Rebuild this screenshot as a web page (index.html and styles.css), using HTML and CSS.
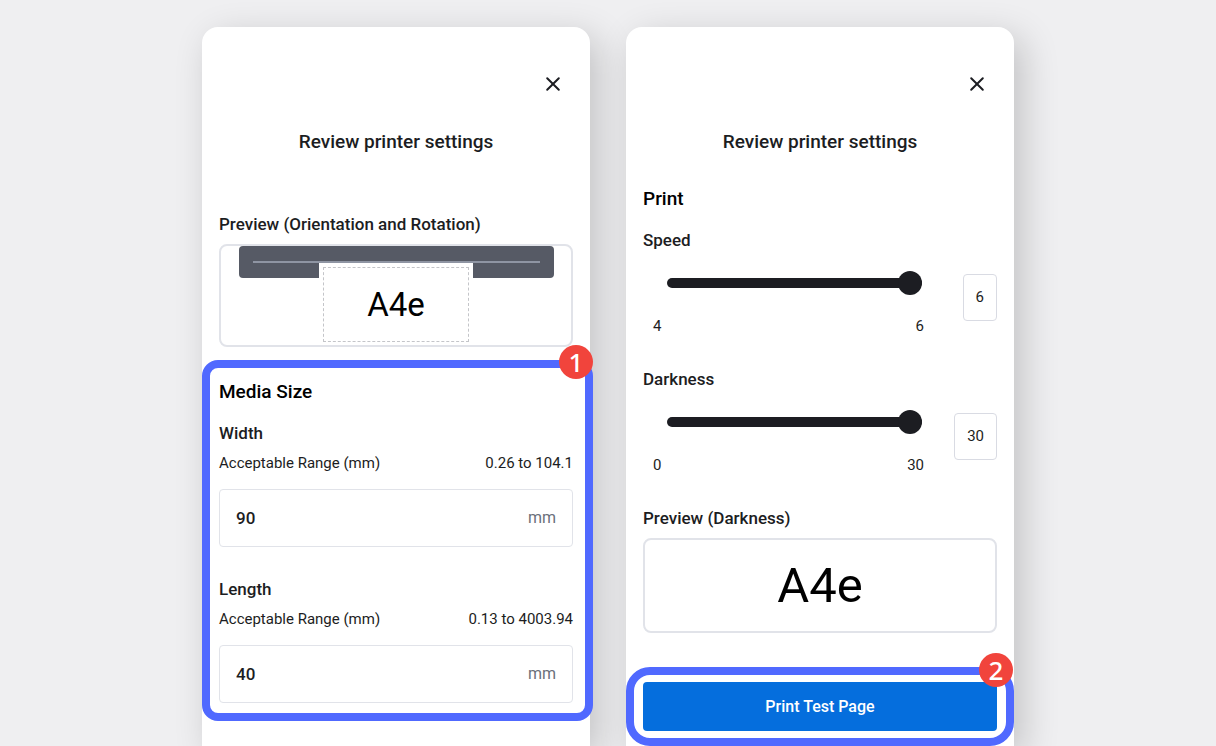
FILE: index.html
```
<!DOCTYPE html>
<html lang="en">
<head>
    <meta charset="utf-8">
    <meta name="viewport" content="width=device-width, initial-scale=1">
    <title>Review printer settings</title>
    <link rel="stylesheet" href="styles.css">
</head>
<body>
    <div class="container">

        <!-- Step 1: media size -->
        <section class="panel">
            <header class="panel-head">
                <button class="close" type="button" aria-label="Close">
                    <svg width="16" height="16" viewBox="0 0 16 16"><path d="M2.2 2.2 13.8 13.8M13.8 2.2 2.2 13.8"/></svg>
                </button>
                <h1>Review printer settings</h1>
            </header>

            <h3 class="preview-label">Preview (Orientation and Rotation)</h3>
            <div class="preview orientation">
                <div class="printer">
                    <div class="slot"></div>
                </div>
                <div class="paper">
                    <div class="sample">A4e</div>
                </div>
            </div>

            <div class="highlight media">
                <span class="badge">1</span>
                <h2>Media Size</h2>

                <div class="field">
                    <label for="width">Width</label>
                    <div class="range-text">
                        <span>Acceptable Range (mm)</span>
                        <span>0.26 to 104.1</span>
                    </div>
                    <div class="input-box">
                        <input id="width" type="text" value="90">
                        <span class="unit">mm</span>
                    </div>
                </div>

                <div class="field">
                    <label for="length">Length</label>
                    <div class="range-text">
                        <span>Acceptable Range (mm)</span>
                        <span>0.13 to 4003.94</span>
                    </div>
                    <div class="input-box">
                        <input id="length" type="text" value="40">
                        <span class="unit">mm</span>
                    </div>
                </div>
            </div>
        </section>

        <!-- Step 2: print settings -->
        <section class="panel">
            <header class="panel-head">
                <button class="close" type="button" aria-label="Close">
                    <svg width="16" height="16" viewBox="0 0 16 16"><path d="M2.2 2.2 13.8 13.8M13.8 2.2 2.2 13.8"/></svg>
                </button>
                <h1>Review printer settings</h1>
            </header>

            <h2 class="print-title">Print</h2>

            <div class="setting">
                <label for="speed">Speed</label>
                <div class="setting-row">
                    <div class="slider">
                        <input id="speed" type="range" min="4" max="6" value="6">
                        <div class="limits"><span>4</span><span>6</span></div>
                    </div>
                    <output class="value" for="speed">6</output>
                </div>
            </div>

            <div class="setting">
                <label for="darkness">Darkness</label>
                <div class="setting-row">
                    <div class="slider">
                        <input id="darkness" type="range" min="0" max="30" value="30">
                        <div class="limits"><span>0</span><span>30</span></div>
                    </div>
                    <output class="value" for="darkness">30</output>
                </div>
            </div>

            <h3>Preview (Darkness)</h3>
            <div class="preview darkness">A4e</div>

            <div class="highlight action">
                <span class="badge">2</span>
                <button class="print-button" type="button">Print Test Page</button>
            </div>
        </section>

    </div>
</body>
</html>
```
FILE: styles.css
```
* {
    box-sizing: border-box;
    margin: 0;
    padding: 0;
}

body {
    background: #efeff1;
    color: #1c1d22;
    font-family: Roboto, "Liberation Sans", sans-serif;
    font-size: 15px;
    line-height: 20px;
}

input, button {
    font-family: inherit;
    color: inherit;
}

.container {
    display: flex;
    justify-content: center;
    gap: 36px;
    min-height: 100vh;
    padding: 27px 20px 0;
    overflow: hidden;
}

.panel {
    flex: 0 1 388px;
    padding: 43px 17px 0;
    background: white;
    border-radius: 16px 16px 0 0;
    box-shadow: 9px 10px 36px rgba(0, 0, 0, 0.19);
}

.panel-head {
    display: flex;
    flex-direction: column;
}

.close {
    align-self: flex-end;
    display: flex;
    align-items: center;
    justify-content: center;
    width: 28px;
    height: 28px;
    margin-right: 6px;
    border: none;
    background: none;
    cursor: pointer;
}

.close svg {
    fill: none;
    stroke: #1c1d22;
    stroke-width: 2;
    stroke-linecap: round;
}

h1, h2 {
    font-size: 19px;
    font-weight: 500;
    line-height: 24px;
}

h1 {
    margin-top: 32px;
    text-align: center;
}

h2 {
    color: black;
}

h3, label {
    display: block;
    font-size: 17px;
    font-weight: 500;
    line-height: 20px;
}

/* previews */
.preview-label {
    margin-top: 60px;
}

.preview {
    margin-top: 10px;
    border: 2px solid #e1e3e9;
    border-radius: 8px;
    color: black;
}

.orientation {
    display: flex;
    flex-direction: column;
    align-items: center;
    height: 103px;
}

.printer {
    width: 90%;
    height: 32px;
    padding: 15px 14px 0;
    border-radius: 4px;
    background: #565a65;
}

.slot {
    height: 2px;
    background: #8f95a3;
}

.paper {
    width: 154px;
    height: 80px;
    margin-top: -15px;
    padding: 4px;
    background: white;
}

.sample {
    height: 75px;
    border: 1px dashed #c4c5c9;
    font-size: 33px;
    line-height: 73px;
    text-align: center;
}

.darkness {
    height: 95px;
    font-size: 49px;
    line-height: 91px;
    text-align: center;
}

/* numbered step outlines */
.highlight {
    position: relative;
    border: 8px solid #5069ff;
    border-radius: 16px;
}

.badge {
    position: absolute;
    top: -23px;
    right: -8px;
    width: 34px;
    height: 34px;
    border-radius: 50%;
    background: #f1443c;
    color: white;
    font-family: "Noto Sans", sans-serif;
    font-size: 26px;
    font-weight: 500;
    line-height: 34px;
    text-align: center;
}

.media {
    margin: 13px -20px 0 -17px;
    padding: 12px 12px 10px 9px;
}

/* media size fields */
.field {
    margin-top: 19px;
}

.field + .field {
    margin-top: 32px;
}

.range-text {
    display: flex;
    justify-content: space-between;
    margin-top: 10px;
    color: #1c1d22;
}

.input-box {
    display: flex;
    align-items: center;
    height: 58px;
    margin-top: 16px;
    padding: 0 16px;
    border: 1px solid #e1e3e9;
    border-radius: 4px;
    font-size: 16px;
}

.input-box input {
    flex: 1;
    min-width: 0;
    border: none;
    outline: none;
    background: none;
    font-size: 17px;
    font-weight: 500;
}

.unit {
    color: #6b6f7a;
}

/* print sliders */
.print-title {
    margin-top: 33px;
    margin-bottom: 19px;
}

.setting {
    height: 139px;
}

.setting-row {
    display: flex;
    justify-content: space-between;
    margin-top: 20px;
}

.slider {
    width: 281px;
    padding-left: 10px;
}

.slider input {
    display: block;
    appearance: none;
    width: 255px;
    height: 26px;
    margin-left: 14px;
    background: none;
}

.slider input::-webkit-slider-runnable-track {
    height: 10px;
    border-radius: 5px;
    background: #1c1d22;
}

.slider input::-webkit-slider-thumb {
    appearance: none;
    width: 24px;
    height: 24px;
    margin-top: -7px;
    border-radius: 50%;
    background: #1c1d22;
}

.limits {
    display: flex;
    justify-content: space-between;
    margin-top: 20px;
}

.value {
    height: 47px;
    margin-top: 4px;
    padding: 0 12px;
    border: 1px solid #d9dbe3;
    border-radius: 4px;
    line-height: 45px;
}

/* test page button */
.action {
    margin: 34px -17px 0;
    padding: 7px 9px;
    border-radius: 24px;
}

.action .badge {
    top: -22px;
    right: -7px;
}

.print-button {
    display: block;
    width: 100%;
    height: 49px;
    border: none;
    border-radius: 4px;
    background: #056edd;
    color: white;
    font-size: 16px;
    font-weight: 500;
    cursor: pointer;
}
```
